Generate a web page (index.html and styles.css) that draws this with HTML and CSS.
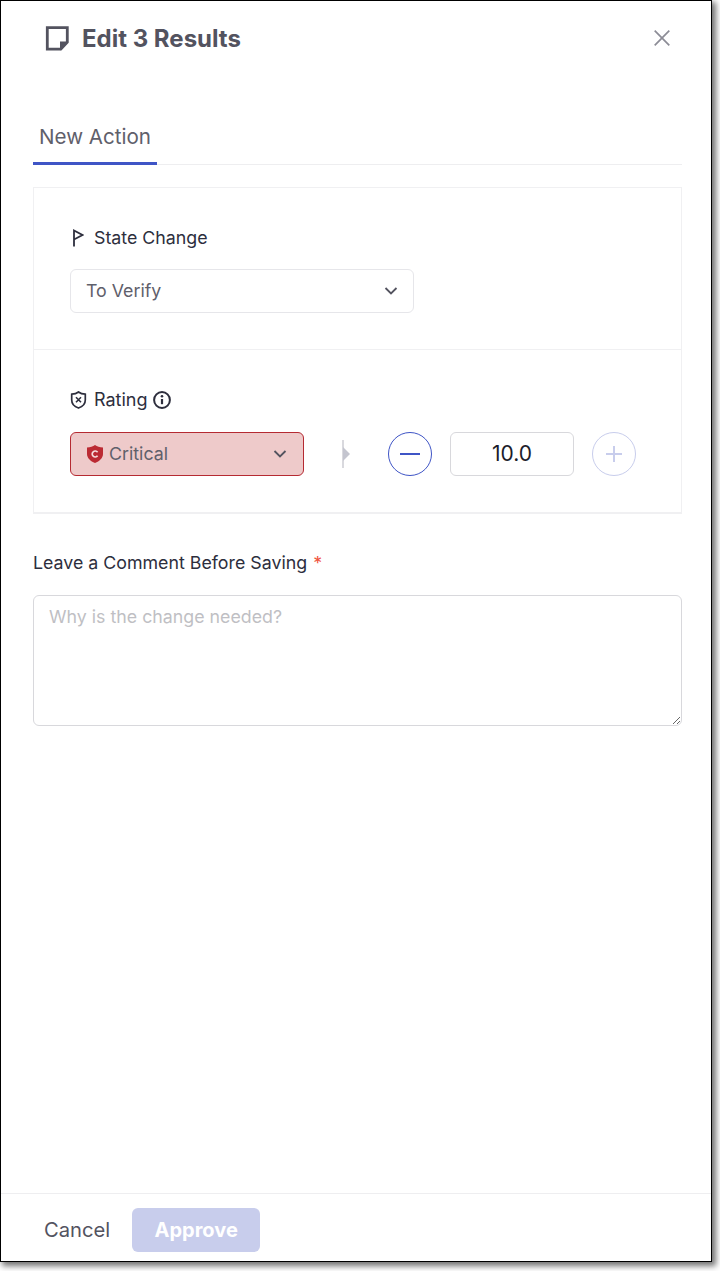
FILE: index.html
```html
<!DOCTYPE html>
<html lang="en">
<head>
<meta charset="utf-8">
<title>Edit 3 Results</title>
<link rel="stylesheet" href="styles.css">
</head>
<body>
<div class="window">
  <header class="header">
    <div class="title-group">
      <svg class="note-icon" viewBox="0 0 24 25" width="24" height="25"><path d="M2.300 1.700h20v14.500l-6.500 7H2.300z" fill="none" stroke="#53535f" stroke-width="2.800"/><path d="M15 15.500h8.500L15 24.500z" fill="#53535f"/></svg>
      <h1 class="title">Edit 3 Results</h1>
    </div>
    <svg class="close-icon" viewBox="0 0 16 16" width="16" height="16"><path d="M.7.7l14.6 14.6M15.300.7L.7 15.300" fill="none" stroke="#8c8c96" stroke-width="1.700"/></svg>
  </header>
  <main class="content">
    <nav class="tabs"><div class="tab">New Action</div></nav>
    <section class="card">
      <div class="card-section state">
        <div class="field-label">
          <svg class="flag-icon" viewBox="0 0 12 18" width="12" height="18"><path d="M2 17.500V1.500L10.500 6 2 10.500" fill="none" stroke="#2d2e3d" stroke-width="1.800"/></svg>
          <span>State Change</span>
        </div>
        <div class="select state-select"><span>To Verify</span>
          <svg class="chev" viewBox="0 0 14 8" width="14" height="8"><path d="M1.500 1l5.500 5.500L12.500 1" fill="none" stroke="#53535f" stroke-width="1.800"/></svg>
        </div>
      </div>
      <div class="card-section rating">
        <div class="field-label rating-label">
          <svg class="shield-icon" viewBox="0 0 17 18" width="17" height="18"><path d="M8.500 1c1.700 1.300 4 2.100 6.800 2.200v5.800c0 3.900-2.800 6.700-6.800 8-4-1.300-6.800-4.100-6.800-8V3.200C4.500 3.100 6.800 2.300 8.500 1z" fill="none" stroke="#2d2e3d" stroke-width="1.700"/><path d="M6 6.300l5 5M11 6.300l-5 5" fill="none" stroke="#2d2e3d" stroke-width="1.600"/></svg>
          <span class="rating-text">Rating</span>
          <svg class="info-icon" viewBox="0 0 18 18" width="18" height="18"><circle cx="9" cy="9" r="7.900" fill="none" stroke="#2d2e3d" stroke-width="2"/><path d="M9 8v5.200" stroke="#2d2e3d" stroke-width="2.200" fill="none"/><circle cx="9" cy="5.200" r="1.300" fill="#2d2e3d"/></svg>
        </div>
        <div class="rating-row">
          <div class="select critical">
            <svg class="badge-icon" viewBox="0 0 16 18" width="16" height="18"><path d="M8 0c2 1.400 4.700 2.200 8 2.400v6.600c0 4-3.500 7.200-8 9-4.500-1.800-8-5-8-9V2.400C3.300 2.200 6 1.400 8 0z" fill="#bb2a33"/><path d="M10.600 7.200a3 3 0 1 0 0 3.600" fill="none" stroke="#f5dcdc" stroke-width="1.700"/></svg>
            <span class="critical-text">Critical</span>
            <svg class="chev" viewBox="0 0 14 8" width="14" height="8"><path d="M1.500 1l5.500 5.500L12.500 1" fill="none" stroke="#53535f" stroke-width="1.800"/></svg>
          </div>
          <div class="slider-stub"><span class="stub-arrow"></span></div>
          <button class="round minus" type="button"><svg viewBox="0 0 20 20" width="20" height="20"><path d="M0 10h20" stroke="#3f55c6" stroke-width="2" fill="none"/></svg></button>
          <div class="score">10.0</div>
          <button class="round plus" type="button"><svg viewBox="0 0 18 18" width="18" height="18"><path d="M9 1v16M1 9h16" stroke="#c8cdec" stroke-width="2" fill="none"/></svg></button>
        </div>
      </div>
    </section>
    <label class="comment-label" for="comment">Leave a Comment Before Saving <span class="req">*</span></label>
    <textarea id="comment" class="comment" placeholder="Why is the change needed?"></textarea>
  </main>
  <footer class="footer">
    <button class="cancel" type="button">Cancel</button>
    <button class="approve" type="button">Approve</button>
  </footer>
</div>
</body>
</html>
```
FILE: styles.css
```css
* { box-sizing: border-box; }
html, body { margin: 0; padding: 0; background: #fff; }
body { font-family: Inter, "Liberation Sans", sans-serif; height: 1271px; overflow: hidden; }
.window {
  width: 712px; height: 1262px; border: 1px solid #000; background: #fff;
  display: flex; flex-direction: column;
  box-shadow: 3px 3px 6px 1px rgba(0,0,0,.55);
}
.header { display: flex; justify-content: space-between; align-items: flex-start; padding: 23px 41px 0 44px; height: 76px; }
.title-group { display: flex; align-items: center; gap: 13px; height: 28px; }
.title { margin: 0; font-size: 24px; font-weight: 700; color: #53535f; line-height: 30px; padding-top: 1px; }
.close-icon { margin-top: 6px; }
.content { flex: 1; padding: 0 29px 0 32px; display: flex; flex-direction: column; }
.tabs { height: 88px; border-bottom: 1px solid #eeeef0; display: flex; align-items: flex-end; }
.tab { width: 124px; height: 53px; padding: 11px 0 0 6px; font-size: 20.600px; line-height: 28px; color: #5f606b; border-bottom: 3px solid #3f55c6; margin-bottom: -1px; }
.card { margin-top: 22px; border: 1px solid #f0f0f2; border-bottom-width: 2px; }
.card-section { padding-left: 36px; }
.state { height: 162px; padding-top: 38px; border-bottom: 1px solid #f0f0f2; }
.rating { height: 162px; padding-top: 38px; }
.field-label { display: flex; align-items: center; gap: 10px; font-size: 17.800px; line-height: 24px; color: #2d2e3d; }
.rating-label { gap: 7px; font-size: 18px; }
.rating-text { margin-right: -2px; }
.flag-icon { margin-left: 2px; }
.select { width: 344px; height: 44px; border: 1px solid #e6e6ea; border-radius: 6px; margin-top: 19px; padding: 0 16px 0 15px; display: flex; align-items: center; justify-content: space-between; font-size: 17.800px; color: #5f606b; }
.state-select span { padding-bottom: 2px; }
.state-select .chev { margin-right: -1px; }
.rating-row { display: flex; align-items: center; margin-top: 20px; }
.critical { width: 234px; margin-top: 0; padding-left: 16px; padding-bottom: 1px; background: #eecaca; border-color: #b52a32; justify-content: flex-start; }
.badge-icon { margin-right: 6px; flex: none; }
.critical-text { flex: 1; }
.slider-stub { width: 2px; height: 28px; background: #d9d9de; margin-left: 38px; position: relative; }
.stub-arrow { position: absolute; left: 1px; top: 7px; border-left: 7px solid #c4c5cf; border-top: 7px solid transparent; border-bottom: 7px solid transparent; }
.round { width: 44px; height: 44px; border-radius: 50%; background: #fff; padding: 0; display: flex; align-items: center; justify-content: center; }
.minus { border: 1px solid #3f55c6; margin-left: 44px; }
.plus { border: 1px solid #c8cdec; margin-left: 18px; }
.score { width: 124px; height: 44px; margin-left: 18px; padding-bottom: 1px; border: 1px solid #d8d8dc; border-radius: 6px; display: flex; align-items: center; justify-content: center; font-size: 21px; color: #1c1d2b; }
.comment-label { margin-top: 37px; font-size: 17.800px; line-height: 24px; color: #2d2e3d; }
.req { color: #f0553f; margin-left: 1px; }
.comment { display: block; width: 649px; height: 131px; margin-top: 20px; border: 1px solid #d8d8dc; border-radius: 6px; padding: 9px 15px; font-family: inherit; font-size: 17.800px; line-height: 24px; outline: none; background: #fff; }
.comment::placeholder { color: #bfbfc4; opacity: 1; }
.footer { height: 68px; border-top: 1px solid #eeeef0; display: flex; align-items: flex-start; padding: 14px 0 0 43px; gap: 22px; }
.cancel { background: none; border: 0; padding: 0 0 2px; height: 44px; font-family: inherit; font-size: 20.200px; color: #53535f; }
.approve { width: 128px; height: 44px; border: 0; border-radius: 6px; background: #c8cdec; color: #fff; font-family: inherit; font-size: 20px; font-weight: 700; padding: 0; }
```
